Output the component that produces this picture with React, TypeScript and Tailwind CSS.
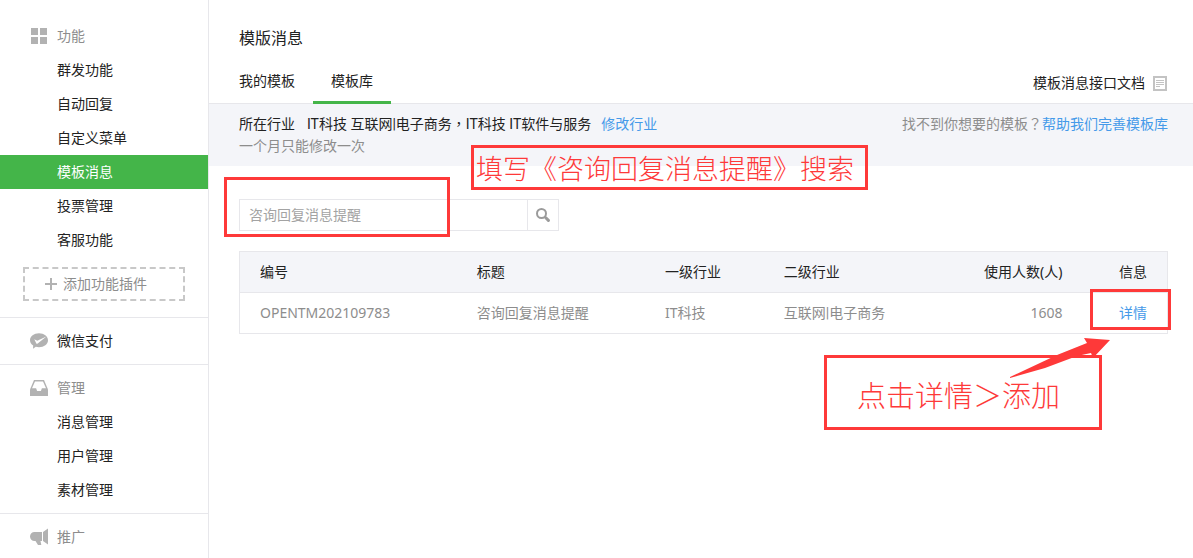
import { useState } from "react";
import type { ReactNode } from "react";

type Group = {
  title: string;
  icon: ReactNode;
  link?: boolean;
  items: string[];
  addPlugin?: boolean;
};

const GridIcon = () => (
  <svg width="18" height="18" viewBox="0 0 18 18" fill="#b2b2b2" aria-hidden="true">
    <path d="M1 1h7v7H1zM10 1h7v7h-7zM1 10h7v7H1zM10 10h7v7h-7z" />
  </svg>
);

const PayIcon = () => (
  <svg width="18" height="18" viewBox="0 0 18 18" aria-hidden="true">
    <path
      fill="#b2b2b2"
      d="M9 1.200c5 0 9 3.100 9 7s-4 7-9 7c-1.100 0-2.200-.15-3.200-.45L3 16.800l.2-3.300C1.200 12.200 0 10.300 0 8.200c0-3.900 4-7 9-7z"
    />
    <path fill="#fff" d="M4.300 7.300l3 1.500 9.100-4.300-8.700 7.100c-.6.4-1.200.3-1.500-.3z" />
  </svg>
);

const InboxIcon = () => (
  <svg width="18" height="18" viewBox="0 0 18 18" aria-hidden="true">
    <path fill="#b2b2b2" d="M4 1h10l4 9.500V17H0v-6.500z" />
    <path fill="#fff" d="M5 2.500h8l3 6.700h-4.100l-1 2.800H7.100l-1-2.800H2z" />
  </svg>
);

const HornIcon = () => (
  <svg width="18" height="18" viewBox="0 0 18 18" fill="#b2b2b2" aria-hidden="true">
    <path d="M4.500 4H12v9h-1.500l.8 4H8L5.500 13h-1C2 13 0 11 0 8.500S2 4 4.500 4zM13 4l5-3.500v16L13 13z" />
  </svg>
);

const groups: Group[] = [
  {
    title: "功能",
    icon: <GridIcon />,
    items: ["群发功能", "自动回复", "自定义菜单", "模板消息", "投票管理", "客服功能"],
    addPlugin: true,
  },
  { title: "微信支付", icon: <PayIcon />, link: true, items: [] },
  { title: "管理", icon: <InboxIcon />, items: ["消息管理", "用户管理", "素材管理"] },
  { title: "推广", icon: <HornIcon />, items: [] },
];

const rows = [
  {
    id: "OPENTM202109783",
    title: "咨询回复消息提醒",
    primary: "IT科技",
    secondary: "互联网|电子商务",
    users: 1608,
  },
];

// full-width punctuation centred in its cell
const Punct = ({ children }: { children: string }) => (
  <span className="font-['Noto_Sans_CJK_TC',sans-serif] leading-none">{children}</span>
);

function Sidebar() {
  const [active, setActive] = useState("模板消息");

  return (
    <nav className="w-[209px] shrink-0 border-r border-[#e7e7eb] pt-[19px]">
      {groups.map((g) => (
        <section
          key={g.title}
          className="border-t border-[#e7e7eb] py-1.5 first:border-t-0 first:pt-0 last:pb-0"
        >
          <h2 className="flex h-[34px] items-center gap-[9px] pl-[30px] text-[#8d8d8d]">
            {g.icon}
            {g.link ? (
              <a href="#" className="text-[#222]">
                {g.title}
              </a>
            ) : (
              g.title
            )}
          </h2>
          {g.items.map((item) => (
            <a
              key={item}
              href="#"
              onClick={() => setActive(item)}
              className={
                item === active
                  ? "block bg-[#44b549] pl-[57px] leading-[34px] text-white"
                  : "block pl-[57px] leading-[34px] text-[#222]"
              }
            >
              {item}
            </a>
          ))}
          {g.addPlugin && (
            <button
              type="button"
              className="my-2.5 ml-[23px] flex h-[34px] w-[162px] items-center gap-1.5 border-2 border-dashed border-[#c8c8c8] pl-5 text-[#8d8d8d]"
            >
              <svg width="12" height="12" viewBox="0 0 12 12" fill="#b2b2b2" aria-hidden="true">
                <path d="M5 0h2v5h5v2H7v5H5V7H0V5h5z" />
              </svg>
              添加功能插件
            </button>
          )}
        </section>
      ))}
    </nav>
  );
}

function Header() {
  return (
    <header className="border-b border-[#e7e7eb] pr-[25px] pl-[30px] pt-[26px]">
      <h1 className="text-base leading-6">模版消息</h1>
      <div className="mt-[11px] flex items-end justify-between">
        <div className="-mb-px flex">
          <a href="#" className="pr-[18px] pb-[3px] leading-10">
            我的模板
          </a>
          <a href="#" className="border-b-[3px] border-[#44b549] px-[18px] leading-10">
            模板库
          </a>
        </div>
        <a href="#" className="flex items-center gap-2 leading-10">
          模板消息接口文档
          <svg width="15" height="15" viewBox="0 0 15 15" aria-hidden="true">
            <path fill="none" stroke="#c3c3c3" strokeWidth="2" d="M1 1h12v13H1z" />
            <path stroke="#c3c3c3" d="M3 4.500h8M3 6.500h8M3 8.500h8M3 10.500h4" />
          </svg>
        </a>
      </div>
    </header>
  );
}

function IndustryBar() {
  return (
    <div className="relative flex justify-between bg-[#f4f5f9] py-[9px] pr-[25px] pl-[30px] leading-[22px]">
      <div>
        <p className="flex">
          <span className="mr-3">所在行业</span>
          <span className="mr-2.5 font-['Roboto','Noto_Sans_CJK_SC',sans-serif]">
            IT科技 互联网|电子商务<Punct>，</Punct>IT科技 IT软件与服务
          </span>
          <a href="#" className="text-[#459ae9]">
            修改行业
          </a>
        </p>
        <p className="text-[#8d8d8d]">一个月只能修改一次</p>
      </div>
      <p className="text-[#8d8d8d]">
        找不到你想要的模板<Punct>？</Punct>
        <a href="#" className="text-[#459ae9]">
          帮助我们完善模板库
        </a>
      </p>
      <p className="absolute top-[41px] left-[262px] h-[45px] w-[397px] border-3 border-[#fe3939] pl-0.5 text-[27px] leading-[42px] font-light whitespace-nowrap text-[#fe3939]">
        填写《咨询回复消息提醒》搜索
      </p>
    </div>
  );
}

function Search() {
  const [keyword, setKeyword] = useState("咨询回复消息提醒");

  return (
    <form
      className="relative flex h-8 w-80 border border-[#e7e7eb]"
      onSubmit={(e) => e.preventDefault()}
    >
      <input
        type="text"
        aria-label="搜索模板"
        value={keyword}
        onChange={(e) => setKeyword(e.target.value)}
        className="min-w-0 flex-1 px-[9px] text-[#a3a3a3] outline-none"
      />
      <button
        type="submit"
        aria-label="搜索"
        className="flex w-[31px] items-center justify-center border-l border-[#e7e7eb]"
      >
        <svg width="14" height="14" viewBox="0 0 14 14" fill="none" stroke="#9b9b9b" aria-hidden="true">
          <circle cx="5.500" cy="5.500" r="4.500" strokeWidth="2" />
          <path strokeWidth="3" strokeLinecap="round" d="M9.800 9.800l2.600 2.600" />
        </svg>
      </button>
      <span className="pointer-events-none absolute -top-[23px] -left-4 h-[60px] w-[226px] border-3 border-[#fe3939]" />
    </form>
  );
}

function TemplateTable() {
  return (
    <div className="relative mt-5">
      <table className="w-full table-fixed border-collapse border border-[#e7e7eb]">
        <colgroup>
          <col className="w-[23.4%]" />
          <col className="w-[20.3%]" />
          <col className="w-[12.8%]" />
          <col className="w-[18%]" />
          <col />
          <col className="w-[85px]" />
        </colgroup>
        <thead className="bg-[#f4f5f9]">
          <tr className="h-[41px] border-b border-[#e7e7eb] text-left">
            <th className="px-5 font-normal">编号</th>
            <th className="px-5 font-normal">标题</th>
            <th className="px-5 font-normal">一级行业</th>
            <th className="px-5 font-normal">二级行业</th>
            <th className="px-5 text-right font-normal">使用人数(人)</th>
            <th className="px-5 text-right font-normal">信息</th>
          </tr>
        </thead>
        <tbody>
          {rows.map((r) => (
            <tr key={r.id} className="h-[41px] text-[#8d8d8d]">
              <td className="px-5">{r.id}</td>
              <td className="px-5">{r.title}</td>
              <td className="px-5">{r.primary}</td>
              <td className="px-5 font-['Roboto','Noto_Sans_CJK_SC',sans-serif]">{r.secondary}</td>
              <td className="px-5 text-right">{r.users}</td>
              <td className="px-5 text-right">
                <a href="#" className="text-[#459ae9]">
                  详情
                </a>
              </td>
            </tr>
          ))}
        </tbody>
      </table>
      <span className="pointer-events-none absolute top-[38px] -right-[3px] h-[41px] w-[81px] border-3 border-[#fe3939]" />
      <p className="absolute top-[104px] right-[66px] h-[75px] w-[278px] border-3 border-[#fe3939] pl-[30px] text-[29px] leading-[76px] font-light whitespace-nowrap text-[#fe3939]">
        点击详情＞添加
      </p>
      <svg
        className="absolute top-[86px] right-[57px]"
        width="102"
        height="42"
        viewBox="0 0 102 42"
        fill="#fe3939"
        aria-hidden="true"
      >
        <path d="M1 40L48 18 78 6 75 1l26 2-17 18-2-5-14 3-32 12-35 10z" />
      </svg>
    </div>
  );
}

export default function App() {
  return (
    <div className="flex min-h-screen bg-white font-['Noto_Sans','Noto_Sans_CJK_SC',sans-serif] text-sm text-[#222]">
      <Sidebar />
      <main className="min-w-0 flex-1">
        <Header />
        <IndustryBar />
        <div className="pt-[33px] pr-[25px] pl-[30px]">
          <Search />
          <TemplateTable />
        </div>
      </main>
    </div>
  );
}
